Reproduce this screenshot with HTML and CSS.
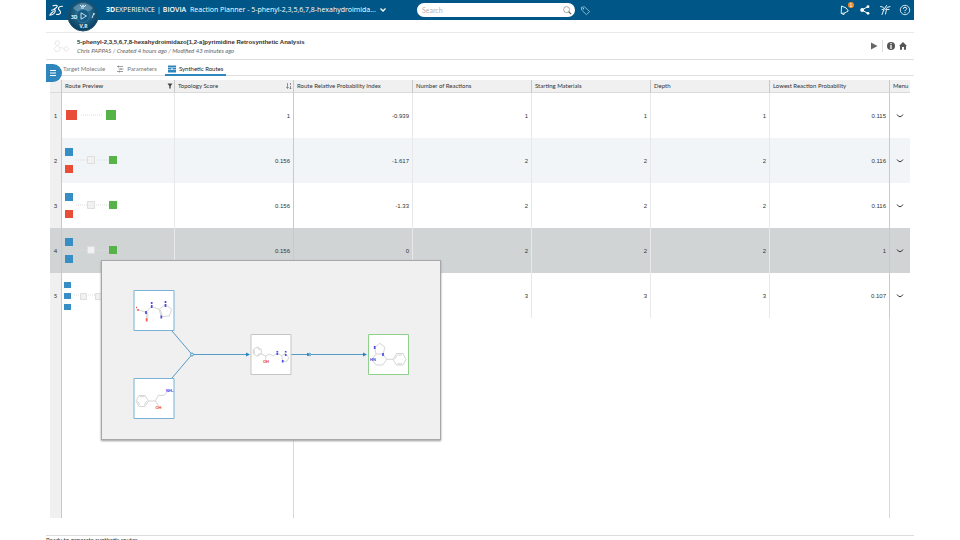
FILE: index.html
```html
<!DOCTYPE html>
<html lang="en">
<head>
<meta charset="utf-8">
<title>Reaction Planner</title>
<link rel="stylesheet" href="styles.css">
</head>
<body>
<svg class="defs" aria-hidden="true">
  <symbol id="chevron" viewBox="0 0 8 6"><path d="M1.300 1.800L2.500 3.200Q4 4.300 5.500 3.200L6.700 1.800" fill="none" stroke="currentColor" stroke-width="1" stroke-linecap="round"/></symbol>
</svg>
<div class="app">
  <header class="topbar">
    <svg class="logo" viewBox="0 0 16 16" role="img" aria-label="DS"><g fill="none" stroke="#fff" stroke-width="1.1" stroke-linecap="round" stroke-linejoin="round"><path d="M5 3.800Q9.300 2.500 9.300 4.200Q9 5.500 6 7.300"/><path d="M3.500 8.200L6.500 7.500Q8 8.500 6.500 11Q4.800 13 1.800 13.200Q3 11 5.300 9.500"/><path d="M14.500 4.200Q11.300 4 10.500 6Q10.200 7.500 12 9Q13.300 10.800 11.500 12Q10 12.800 8.500 12.300"/></g></svg>
    <button class="compass" aria-label="Compass">
      <svg viewBox="0 0 32 32"><defs><radialGradient id="ball" cx=".5" cy=".4" r=".65"><stop offset="0" stop-color="#3d83a8"/><stop offset=".6" stop-color="#155579"/><stop offset="1" stop-color="#073650"/></radialGradient></defs>
        <circle cx="16" cy="16" r="15" fill="url(#ball)" stroke="#1e4f6b"/>
        <path d="M6 8Q16-2 26 8Q22 13 16 11Q10 13 6 8Z" fill="#8bb1c7" opacity=".5"/>
        <circle cx="16" cy="16" r="6.500" fill="#145b86" stroke="#397b9f" stroke-width=".7"/>
        <path d="M14 12.800L19.500 16L14 19.200Z" fill="none" stroke="#d6e9f2" stroke-width=".9"/>
        <path d="M13 5l2 2 1-2 1 2 2-2M14 8h3M25 18l2-5M26 14h2" fill="none" stroke="#eaf4f9" stroke-width=".9"/>
        <text x="4" y="18.500" class="ball-text">3D</text><text x="12.500" y="28" class="ball-text">V,R</text>
      </svg>
    </button>
    <div class="brand"><span><b>3D</b>EXPERIENCE</span><span>|</span><b class="biovia">BIOVIA</b></div>
    <button class="app-title">Reaction Planner - 5-phenyl-2,3,5,6,7,8-hexahydroimida... <svg viewBox="0 0 8 6"><path d="M1.500 1.500L4 4L6.500 1.500" fill="none" stroke="#fff" stroke-width="1.300"/></svg></button>
    <div class="search"><input type="search" placeholder="Search" aria-label="Search"><svg viewBox="0 0 10 10"><circle cx="4" cy="4" r="3.300" fill="none" stroke="#777" stroke-width=".7"/><path d="M6.300 6.300L9 9" stroke="#555" stroke-width="1.200"/></svg></div>
    <button class="icon tag" aria-label="Tags"><svg viewBox="0 0 12 12"><path d="M1.500 2.500L5 2L10.500 7.300L7 10.500L1.800 5.500Z" fill="none" stroke="#b9d6e6" stroke-width=".8"/><circle cx="3.700" cy="4" r=".8" fill="#b9d6e6"/></svg></button>
    <nav class="actions">
      <button class="icon" aria-label="Notifications"><svg viewBox="0 0 12 12"><path d="M2.500 2L2.200 9.500Q6 9.500 9.300 7Q8.500 3.500 2.500 2ZM3 9.500l1.500 1.500 1-1.800" fill="none" stroke="#fff" stroke-width=".9" stroke-linejoin="round"/></svg><span class="badge">1</span></button>
      <button class="icon" aria-label="Share"><svg viewBox="0 0 12 12"><path d="M9 2.500L3 6L9 9.500" fill="none" stroke="#fff"/><g fill="#fff"><circle cx="3.200" cy="6" r="2"/><circle cx="9" cy="2.700" r="1.400"/><circle cx="9" cy="9.300" r="1.400"/></g></svg></button>
      <button class="icon" aria-label="Collaborate"><svg viewBox="0 0 12 12"><path d="M1.500 2.500Q4 2 5 4.500M7.500 1.500Q4.500 5 3 10.500M11 2.500Q7.500 2.500 6.500 5.500M10 5.500H7.500L6.500 10M3 5.500l2 .5" fill="none" stroke="#e5f0f6" stroke-width="1" stroke-linecap="round"/></svg></button>
      <button class="icon" aria-label="Help"><svg viewBox="0 0 12 12"><circle cx="6" cy="6" r="4.700" fill="none" stroke="#fff" stroke-width=".8"/><path d="M4.300 4.800Q4.500 3.200 6 3.200T7.700 4.600Q7.700 5.500 6.600 6Q6 6.400 6 7.200M6 8.200V9.200" fill="none" stroke="#fff"/></svg></button>
    </nav>
  </header>

  <section class="doc">
    <svg class="thumb" viewBox="0 0 18 14" aria-hidden="true"><g fill="none" stroke="#e2e2e2" stroke-width=".8"><path d="M3 2l3-.5 1 3-2.500 2L2 5zM4.500 6.500l3 2-1 4-3.500.5-2-3zM7.500 8.500l4 1M12 8.500l3-1 2 2.500-2 2.500-3-1z"/></g></svg>
    <div class="doc-text"><h1>5-phenyl-2,3,5,6,7,8-hexahydroimidazo[1,2-a]pyrimidine Retrosynthetic Analysis</h1>
      <p>Chris PAPPAS / Created 4 hours ago / Modified 43 minutes ago</p></div>
    <div class="doc-tools">
      <button class="icon" aria-label="Run"><svg viewBox="0 0 12 12"><path d="M3 2.500L9.500 6L3 9.500Z" fill="#666"/></svg></button><i class="rule"></i>
      <button class="icon" aria-label="Information"><svg viewBox="0 0 12 12"><circle cx="6" cy="6" r="4" fill="#555"/><path d="M6 3v1.200M6 5v4" stroke="#fff" stroke-width="1.300"/></svg></button>
      <button class="icon" aria-label="Home"><svg viewBox="0 0 12 12"><path d="M6 2L10 6H9V9.800H7V7H5V9.800H3V6H2Z" fill="#555"/></svg></button>
    </div>
  </section>

  <nav class="tabs">
    <button class="menu" aria-label="Menu"><svg viewBox="0 0 8 8"><path d="M1 1.500h6M1 4h6M1 6.500h6" stroke="#fff"/></svg></button>
    <button class="tab">Target Molecule</button>
    <button class="tab"><svg viewBox="0 0 8 8"><path d="M1 1.500h6M2.500 4h5M1 6.500h6M2.500 .5v2M5 3v2M3.500 5.500v2" stroke="#888" stroke-width=".8"/></svg>Parameters</button>
    <button class="tab active"><svg viewBox="0 0 8 8"><path d="M0 .5h8v2H0zM0 3h3.500v1.500H0zM0 5h8v2.500H0zM4.500 3H8v1.500H4.500z" fill="#2f86bd"/></svg>Synthetic Routes</button>
  </nav>

  <main class="grid">
    <table>
      <colgroup><col class="c-num"><col class="c-route"><col><col><col><col><col><col class="c-low"><col class="c-menu"></colgroup>
      <thead><tr><th></th>
        <th><div class="head">Route Preview<svg viewBox="0 0 6 6"><path d="M.5 .5h5L3.700 3v2.500H2.300V3z" fill="#444"/></svg></div></th>
        <th class="strong"><div class="head">Topology Score<svg viewBox="0 0 6 6"><path d="M1.500 0v5M.3 4l1.200 1.500L2.700 4M4.500 0v2M4.500 3v2.700M3.700 5.500h1.600" fill="none" stroke="#666" stroke-width=".7"/></svg></div></th>
        <th>Route Relative Probability Index</th><th>Number of Reactions</th><th>Starting Materials</th><th>Depth</th><th class="strong">Lowest Reaction Probability</th><th>Menu</th></tr></thead>
      <tbody>
        <tr><th>1</th><td class="route"><svg viewBox="0 0 112 45"><path d="M19 22h22" class="link"/><path d="M4 17h11v10H4z" class="red"/><path d="M44 17h10v10H44z" class="green"/></svg></td><td class="strong">1</td><td>-0.939</td><td>1</td><td>1</td><td>1</td><td class="strong">0.115</td><td class="more"><button aria-label="Row 1 menu"><svg><use href="#chevron"/></svg></button></td></tr>
        <tr class="alt"><th>2</th><td class="route"><svg viewBox="0 0 112 45"><path d="M14 22h34" class="link"/><path d="M3 10h8v8H3z" class="blue"/><path d="M3 27h8v8H3z" class="red"/><path d="M25.500 18.500h7v7h-7z" class="mid"/><path d="M47 18h8v8h-8z" class="green"/></svg></td><td class="strong">0.156</td><td>-1.617</td><td>2</td><td>2</td><td>2</td><td class="strong">0.116</td><td class="more"><button aria-label="Row 2 menu"><svg><use href="#chevron"/></svg></button></td></tr>
        <tr><th>3</th><td class="route"><svg viewBox="0 0 112 45"><path d="M14 22h34" class="link"/><path d="M3 10h8v8H3z" class="blue"/><path d="M3 27h8v8H3z" class="red"/><path d="M25.500 18.500h7v7h-7z" class="mid"/><path d="M47 18h8v8h-8z" class="green"/></svg></td><td class="strong">0.156</td><td>-1.33</td><td>2</td><td>2</td><td>2</td><td class="strong">0.116</td><td class="more"><button aria-label="Row 3 menu"><svg><use href="#chevron"/></svg></button></td></tr>
        <tr class="selected"><th>4</th><td class="route"><svg viewBox="0 0 112 45"><path d="M14 22h34" class="link"/><path d="M3 10h8v8H3z" class="blue"/><path d="M3 27h8v8H3z" class="blue"/><path d="M25.500 18.500h7v7h-7z" class="mid"/><path d="M47 18h8v8h-8z" class="green"/></svg></td><td class="strong">0.156</td><td>0</td><td>2</td><td>2</td><td>2</td><td class="strong">1</td><td class="more"><button aria-label="Row 4 menu"><svg><use href="#chevron"/></svg></button></td></tr>
        <tr><th>5</th><td class="route"><svg viewBox="0 0 112 45"><path d="M12 22h40" class="link"/><path d="M2 9h7v6H2zM2 20h7v6H2zM2 31h7v6H2z" class="blue"/><path d="M18.500 20.500h6v6h-6zM33.500 20.500h6v6h-6z" class="mid"/><path d="M50 19h6v6h-6z" class="green"/></svg></td><td class="strong">0.156</td><td>0</td><td>3</td><td>3</td><td>3</td><td class="strong">0.107</td><td class="more"><button aria-label="Row 5 menu"><svg><use href="#chevron"/></svg></button></td></tr>
        <tr class="rest"><th></th><td></td><td class="strong"></td><td></td><td></td><td></td><td></td><td class="strong"></td><td></td></tr>
      </tbody>
    </table>
    <div class="preview" role="tooltip">
      <svg viewBox="0 0 340 180">
        <g class="edge"><path d="M71 71L91 94.500L71 118M91 94.500H147M190 94.500H264" fill="none"/><circle cx="91" cy="94.500" r="1.500"/><circle cx="208.500" cy="94.500" r="1.300"/></g>
        <path d="M149 94.500l-4-2v4zM266 94.500l-4-2v4zM209 94.500l-3-1.700v3.400z" fill="#2b83bd"/>
        <g fill="#fff"><path d="M33 30.500h40v40h-40zM33 118.500h40v40h-40z" stroke="#79b2d6"/><path d="M150 74.500h40v40h-40z" stroke="#c5c5c5"/><path d="M267.500 74.500h40v40h-40z" stroke="#8fd08c"/></g>
        <g class="bond">
          <path d="M38 50L45 52.300L45.700 58M46.500 52L47 58M45 52.300L50.700 46.500L58 49.300L64.500 44.500L70.700 49.300L68.300 56L60.300 56.700L58 49.300M59.200 49.500L61.200 55.500"/>
          <path d="M35 141l3-5.500h6l3.500 5.500-3.500 5.500h-6zM38.700 136.700h4.700M45.700 141l-2.500 4M38.700 145L36.500 141M47.500 141H54.300L57.700 146M54.300 141L57.300 135.300H63.300L67 131"/>
          <path d="M156.300 87l4 2.300v4.700l-4 2.300-4-2.300v-4.700zM153.300 90v3.500M156.300 88.300l3 1.700M156.300 95l3-1.700M160.300 94L164.700 96V100.500M164.700 96L168.300 94L172.300 96L176.300 93L180.700 95.700L184.700 93.300L187.700 97.700L186 101.300H181.700L180.700 95.700"/>
          <path d="M273.700 87.300L278.700 83.300L284 87.300L282 94H275L273.700 87.300M275 94L270.700 99.700L275.300 105H281.700L285.700 99.300L282 94M285.700 99.300H292L295.500 93.500H302L305 99.300L302 105H295.500L292 99.300M296.500 95h4.500M296.500 103.700h4.500M293.500 99.300l2.500-4"/>
        </g>
        <path class="atom" d="M45 51v3M50.700 42v2M50.700 45v3M64.500 41v2M64.500 44v3M60.300 55.500v3M176.300 91v1.500M176.300 93v2M184.700 91v1.500M184.700 94v2M181.700 100v2.500M273.700 86v3M282 93v3"/>
        <path d="M36 50h2M44.700 59h2M35 47.500h1M45.700 58.500v3" stroke="#f05a50" stroke-width="1.700"/>
        <g class="label n"><text x="65" y="132">NH₂</text><text x="269" y="101">HN</text></g>
        <g class="label o"><text x="54.500" y="148.500">OH</text><text x="162" y="103">OH</text></g>
      </svg>
    </div>
  </main>
  <footer>Ready to generate synthetic routes</footer>
</div>
</body>
</html>
```
FILE: styles.css
```css
* { box-sizing: border-box; }
html { height: 100%; overflow: hidden; }
body { margin: 0; background: #fff; color: #333; font: 6px/8px Lato, "Liberation Sans", Arial, sans-serif; }
button { border: 0; padding: 0; background: none; color: inherit; font: inherit; display: flex; align-items: center; }
svg { display: block; flex: none; }
.defs { position: absolute; width: 0; height: 0; }
.app { height: calc(100vh + 3px); margin: 0 46px; display: flex; flex-direction: column; }

.topbar { position: relative; z-index: 2; height: 20px; flex: none; background: #005686; color: #fff; display: flex; align-items: center; font: 7px/10px "Open Sans", "Noto Sans", sans-serif; }
.logo { width: 16px; height: 16px; margin-left: 2px; }
.compass { width: 32px; height: 32px; margin: 12px 7px 0 3px; }
.compass svg { width: 32px; height: 32px; }
.ball-text { font: bold 5px "Open Sans", sans-serif; fill: #eaf4f9; }
.brand { display: flex; gap: 2px; width: 84px; white-space: nowrap; }
.biovia { font-weight: 600; }
.app-title { white-space: nowrap; width: 197px; justify-content: space-between; }
.app-title svg { width: 8px; height: 6px; }
.search { display: flex; align-items: center; width: 158px; height: 14px; margin-left: 30px; padding: 0 3px 0 5px; border-radius: 7px; background: #fff; }
.search input { flex: 1; min-width: 0; border: 0; padding: 0; outline: 0; background: none; font: 7px/10px Lato, sans-serif; }
.search input::placeholder { color: #b5b5b5; }
.search svg { width: 9px; height: 9px; }
.icon { position: relative; }
.icon svg { width: 12px; height: 12px; }
.tag { margin-left: 5px; }
.tag svg { width: 11px; height: 11px; }
.actions { display: flex; gap: 8px; margin-left: auto; padding-right: 3px; }
.badge { position: absolute; left: 9px; top: -2px; width: 6px; height: 6px; border-radius: 3px; background: #ee8b1d; font: 5px/6px "Liberation Sans", sans-serif; text-align: center; }

.doc { display: flex; align-items: center; height: 28px; flex: none; margin-top: 12px; padding: 0 5px 0 7px; border-top: 1px solid #e8e8e8; border-bottom: 1px solid #dedede; }
.thumb { width: 17px; height: 14px; margin-right: 7px; }
h1 { margin: 0; font: bold 6px/9px "Liberation Sans", Arial, sans-serif; color: #333; }
.doc p { margin: 0; font-style: italic; color: #666; }
.doc-tools { display: flex; align-items: center; margin-left: auto; }
.rule { width: 1px; height: 12px; margin: 0 2px; background: #ddd; }

.tabs { position: relative; z-index: 1; display: flex; gap: 11px; height: 16px; flex: none; border-bottom: 1px solid #e0e0e0; }
.menu { width: 16px; height: 18px; margin: 4px -10px 0 0; padding-left: 3px; border-radius: 0 9px 9px 0; background: #2f86bd; }
.menu svg { width: 8px; height: 8px; }
.tab { height: 16px; padding-top: 4px; color: #777; gap: 3px; border-bottom: 2px solid transparent; }
.tab svg { width: 8px; height: 8px; }
.tab + .tab.active { margin-left: -3px; padding: 4px 3px 0; color: #222; border-color: #2f86bd; }

.grid { position: relative; flex: 1; min-height: 0; margin: 4px 4px 17px; }
table { width: 100%; height: 100%; table-layout: fixed; border-collapse: separate; border-spacing: 0; }
.c-num { width: 12px; } .c-route { width: 113px; } .c-low { width: 120px; } .c-menu { width: 20px; }
th, td { padding: 0 3px; font-weight: normal; text-align: right; border-right: 1px solid #e8e8e8; }
td { font-family: "Liberation Sans", Arial, sans-serif; }
thead th { height: 13px; padding: 0 1px 0 3px; background: #f0f0f0; text-align: left; white-space: nowrap; border-right-color: #c8c8c8; border-bottom: 1px solid #dadada; }
.head { display: flex; align-items: center; justify-content: space-between; }
.head svg { width: 6px; height: 6px; }
tbody tr { height: 45px; }
tbody th { padding: 0; background: #f0f0f0; border-right-color: #c8c8c8; text-align: center; }
td.strong { border-right-color: #c5cccf; }
td:last-child, th:last-child { border-right: 0; }
.alt td { background: #f2f5f7; }
.selected th, .selected td { background: #d1d4d5; }
.rest { height: auto; }
.rest td { border-right-color: transparent; }
.rest td.strong { border-right-color: #d5dadc; }
td.route { padding: 0; }
.route svg { width: 112px; height: 45px; }
.red { fill: #e84e37; } .green { fill: #55b348; } .blue { fill: #368ec4; }
.mid { fill: #f1f1f1; stroke: #dedede; }
.link { stroke: #ddd; stroke-dasharray: 1 1; }
td.more { padding: 0; }
.more button { margin: auto; }
.more svg { width: 8px; height: 6px; }

.preview { position: absolute; left: 51px; top: 180px; width: 340px; outline: 1px solid #a8a8a8; outline-offset: -1px; background: #f0f0f0; box-shadow: 0 1px 2px #999; }
.preview svg { width: 100%; }
.edge { fill: #d8e9f4; stroke: #559bc7; }
.bond { fill: none; stroke: #bbb; stroke-width: .6; }
.atom { stroke: #4b4bea; stroke-width: 1.7; }
.label { font: bold 4px "Liberation Sans", sans-serif; }
.n { fill: #4040e8; } .o { fill: #ea3030; }

footer { flex: none; height: 8px; border-top: 1px solid #ddd; line-height: 7px; }
```
